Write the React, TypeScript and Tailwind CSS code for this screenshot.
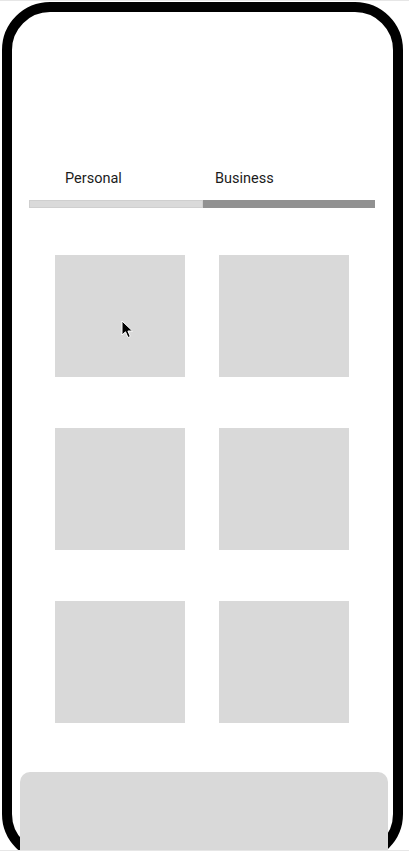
const tiles = [0, 1, 2, 3, 4, 5]

function Cursor() {
  return (
    <svg
      className="absolute left-[121px] top-[319px]"
      width="13"
      height="19"
      viewBox="0 0 13 19"
      aria-hidden="true"
    >
      <path
        d="M1 1 L1 15 L4.5 11.8 L7 17.5 L9.3 16.5 L6.9 11 L11.5 11 Z"
        fill="#000"
        stroke="#fff"
        strokeWidth="1"
        strokeLinejoin="round"
      />
    </svg>
  )
}

export default function App() {
  return (
    <div
      className="relative w-[409px] h-[851px] overflow-hidden bg-white border-t border-b border-[#e6e6e6]"
      style={{ fontFamily: "Roboto, 'Liberation Sans', sans-serif" }}
    >
      <div className="ml-[2px] mt-[1px] w-[401px] h-[860px] rounded-[48px] border-[10px] border-black">
        <div className="pt-[157px] px-[17px]">
          <div className="flex text-[14.5px] leading-5 text-[#1c1c1c]">
            <div className="w-[174px] pl-[36px]">Personal</div>
            <div className="pl-[12px]">Business</div>
          </div>
          <div className="mt-[11px] flex h-[8px] w-[346px]">
            <div className="w-[174px] bg-[#dadada] border border-[#cfcfcf]"></div>
            <div className="flex-1 bg-[#919191]"></div>
          </div>
          <div className="mt-[47px] ml-[26px] grid grid-cols-[130px_130px] gap-x-[34px] gap-y-[51px]">
            {tiles.map((t) => (
              <div key={t} className="h-[122px] bg-[#d9d9d9]"></div>
            ))}
          </div>
        </div>
      </div>
      <div className="absolute left-[20px] top-[771px] w-[368px] h-[100px] rounded-[10px] bg-[#d9d9d9]"></div>
      <Cursor />
    </div>
  )
}
